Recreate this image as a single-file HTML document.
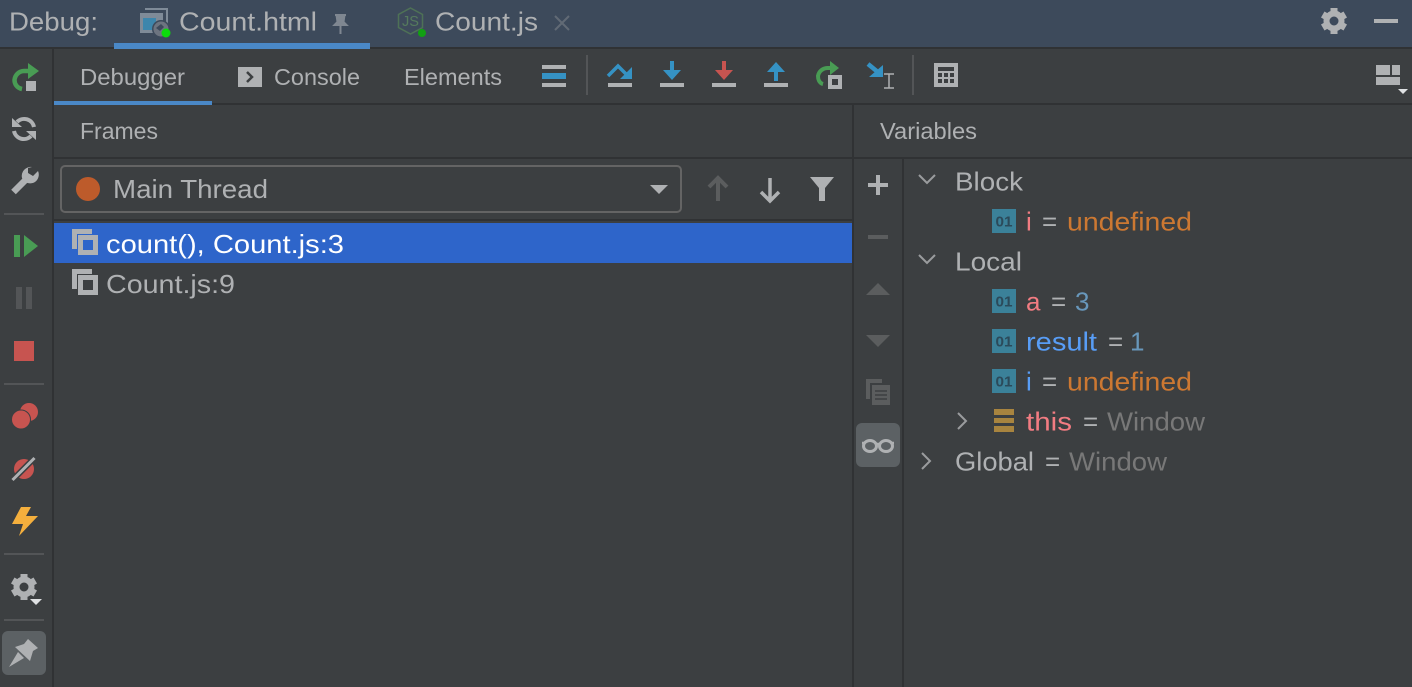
<!DOCTYPE html>
<html><head><meta charset="utf-8"><style>
html,body{margin:0;padding:0;background:#3c3f41;width:1412px;height:687px;overflow:hidden}
svg{display:block;position:absolute;left:0;top:0}
text{font-family:"Liberation Sans",sans-serif;font-size:26px;fill:#afb1b3}
.s{font-size:23.5px}
.p{fill:#f27c82}.b{fill:#589df6}.o{fill:#cc7832}.n{fill:#6897bb}.w{fill:#787878}
.ic{font-size:15px;font-weight:bold;fill:#2b4a5a}
</style></head><body>
<svg width="1412" height="687" viewBox="0 0 1412 687" xmlns="http://www.w3.org/2000/svg">
<defs>
<g id="gear"><circle r="7.500" fill="none" stroke="#afb1b3" stroke-width="6"/>
<path d="M-3.500-13h7v6h-7zM-3.500 7h7v6h-7z" fill="#afb1b3"/>
<path d="M-3.500-13h7v6h-7zM-3.500 7h7v6h-7z" fill="#afb1b3" transform="rotate(60)"/>
<path d="M-3.500-13h7v6h-7zM-3.500 7h7v6h-7z" fill="#afb1b3" transform="rotate(120)"/></g>
</defs>
<rect width="1412" height="687" fill="#3c3f41"/>
<!-- top bar -->
<rect width="1412" height="47" fill="#3d4a5b"/>
<rect y="47" width="1412" height="2" fill="#303234"/>
<rect x="114" y="43" width="256" height="6" fill="#4a88c7"/>
<text x="9" y="30.500" textLength="89" lengthAdjust="spacingAndGlyphs">Debug:</text>
<!-- html tab icon -->
<path d="M145 9h22v15" fill="none" stroke="#7f8b98" stroke-width="2"/>
<rect x="140" y="13" width="23" height="20" fill="#7f8b98"/>
<rect x="143" y="18" width="13" height="12" fill="#3d86ac"/>
<circle cx="161" cy="29" r="9" fill="#3d4a5b"/>
<circle cx="161" cy="29" r="7.500" fill="#6d7480"/>
<path d="M156 28l5-4 3 3-4 4z" fill="#3d4a5b"/>
<circle cx="166" cy="33" r="4.500" fill="#0cdc0c"/>
<text x="179" y="30.500" textLength="138" lengthAdjust="spacingAndGlyphs">Count.html</text>
<!-- pin -->
<path d="M335 15h11M336.500 15l1 7-3 3h12l-3-3 1-7zM340.500 25v9" fill="#7f8791" stroke="#7f8791" stroke-width="2"/>
<!-- js icon -->
<path d="M410.500 8l12 6.500v13l-12 6.500-12-6.500v-13z" fill="none" stroke="#4e7156" stroke-width="1.500"/>
<text x="402" y="26" textLength="17" lengthAdjust="spacingAndGlyphs" style="font-size:15px;fill:#557a5d">JS</text>
<circle cx="422" cy="33" r="4" fill="#12a012"/>
<text x="435" y="30.500" textLength="103" lengthAdjust="spacingAndGlyphs">Count.js</text>
<path d="M555 16l14 14M569 16l-14 14" stroke="#616a75" stroke-width="2"/>
<!-- settings -->
<use href="#gear" transform="translate(1334 21)"/>
<rect x="1374" y="19" width="24" height="4" fill="#afb1b3"/>

<!-- borders -->
<rect x="52" y="49" width="2" height="638" fill="#303234"/>
<rect x="54" y="103" width="1358" height="2" fill="#303234"/>
<rect x="54" y="157" width="1358" height="2" fill="#303234"/>
<rect x="852" y="105" width="2" height="582" fill="#303234"/>
<rect x="902" y="159" width="2" height="528" fill="#303234"/>
<rect x="54" y="219" width="798" height="2" fill="#303234"/>

<!-- tabs -->
<rect x="54" y="101" width="158" height="4" fill="#4a88c7"/>
<text class="s" x="80" y="85" textLength="105" lengthAdjust="spacingAndGlyphs">Debugger</text>
<rect x="238" y="67" width="24" height="20" fill="#afb1b3"/>
<path d="M247 72l5 5-5 5" fill="none" stroke="#3c3f41" stroke-width="2.500"/>
<text class="s" x="274" y="85" textLength="86" lengthAdjust="spacingAndGlyphs">Console</text>
<text class="s" x="404" y="85" textLength="98" lengthAdjust="spacingAndGlyphs">Elements</text>

<!-- toolbar -->
<rect x="542" y="65" width="24" height="4" fill="#afb1b3"/>
<rect x="542" y="73" width="24" height="6" fill="#3592c4"/>
<rect x="542" y="83" width="24" height="4" fill="#afb1b3"/>
<rect x="586" y="55" width="2" height="40" fill="#535557"/>
<!-- step over -->
<rect x="608" y="83" width="24" height="4" fill="#afb1b3"/>
<path d="M608 76l10-10 11 11" fill="none" stroke="#3592c4" stroke-width="3.500"/>
<path d="M632 67v12h-12z" fill="#3592c4"/>
<!-- step into -->
<rect x="660" y="83" width="24" height="4" fill="#afb1b3"/>
<path d="M670 61h4v9h7l-9 10-9-10h7z" fill="#3592c4"/>
<!-- force into -->
<rect x="712" y="83" width="24" height="4" fill="#afb1b3"/>
<path d="M722 61h4v9h7l-9 10-9-10h7z" fill="#c75450"/>
<!-- step out -->
<rect x="764" y="83" width="24" height="4" fill="#afb1b3"/>
<path d="M776 62l9 10h-7v9h-4v-9h-7z" fill="#3592c4"/>
<!-- run to cursor -->
<path d="M823 84C819 83 818 79 818 76 819 71 823 68 828 68h4" fill="none" stroke="#499c54" stroke-width="4"/>
<path d="M830 61l9 7-9 7z" fill="#499c54"/>
<rect x="828" y="75" width="14" height="14" fill="#afb1b3"/>
<rect x="832" y="79" width="6" height="6" fill="#3c3f41"/>
<!-- force to cursor -->
<path d="M868 64l11 9" stroke="#3592c4" stroke-width="4.500"/>
<path d="M883 65v12h-14z" fill="#3592c4"/>
<path d="M884 74h10M884 88h10M889 74v14" stroke="#afb1b3" stroke-width="1.500" fill="none"/>
<rect x="912" y="55" width="2" height="40" fill="#535557"/>
<!-- calc -->
<rect x="934" y="63" width="24" height="24" fill="#afb1b3"/>
<rect x="938" y="67" width="16" height="4" fill="#3c3f41"/>
<path d="M938 73h4v4h-4zM944 73h4v4h-4zM950 73h4v4h-4zM938 79h4v4h-4zM944 79h4v4h-4zM950 79h4v4h-4z" fill="#3c3f41"/>
<!-- layout -->
<rect x="1376" y="65" width="14" height="10" fill="#afb1b3"/>
<rect x="1392" y="65" width="8" height="10" fill="#afb1b3"/>
<rect x="1376" y="77" width="24" height="8" fill="#afb1b3"/>
<path d="M1398 89h10l-5 5z" fill="#dfe1e3"/>

<!-- left column -->
<path d="M22 89C17 88 14.500 84 14.500 80 15 75 19 71 24 71h6" fill="none" stroke="#499c54" stroke-width="4.500"/>
<path d="M28 63l11 8-11 8z" fill="#499c54"/>
<rect x="26" y="81" width="10" height="10" fill="#afb1b3"/>
<!-- sync -->
<path d="M17 122a10 10 0 0 1 17 5M31 136a10 10 0 0 1-17-5" fill="none" stroke="#afb1b3" stroke-width="4"/>
<path d="M12 118v9h10zM36 140v-9H26z" fill="#afb1b3"/>
<!-- wrench -->
<path d="M13.500 192l14-14" stroke="#afb1b3" stroke-width="6.500"/>
<path d="M32 167a9 9 0 0 0-10 11 9 9 0 0 0 13 4 9 9 0 0 0 3-11l-5 5-5-3v-5z" fill="#afb1b3"/>
<rect x="4" y="213" width="40" height="2" fill="#535557"/>
<!-- resume -->
<rect x="14" y="235" width="6" height="22" fill="#499c54"/>
<path d="M24 235l14 11-14 11z" fill="#499c54"/>
<!-- pause -->
<rect x="16" y="287" width="6" height="22" fill="#535557"/>
<rect x="26" y="287" width="6" height="22" fill="#535557"/>
<rect x="14" y="341" width="20" height="20" fill="#c75450"/>
<rect x="4" y="383" width="40" height="2" fill="#535557"/>
<!-- breakpoints -->
<circle cx="29" cy="412" r="9" fill="#c75450"/>
<circle cx="21" cy="419.500" r="9.500" fill="#c75450" stroke="#3c3f41" stroke-width="1"/>
<!-- mute -->
<circle cx="24" cy="469" r="10" fill="#c75450"/>
<path d="M12.500 480l22-22" stroke="#3c3f41" stroke-width="6"/>
<path d="M12.500 480l22-22" stroke="#afb1b3" stroke-width="3"/>
<!-- lightning -->
<path d="M21 507h10l-5 9h12l-19 20 4-12H12z" fill="#f4af3d"/>
<rect x="4" y="553" width="40" height="2" fill="#535557"/>
<!-- gear -->
<use href="#gear" transform="translate(24 587)"/>
<path d="M30 599h12l-6 6z" fill="#dfe1e3"/>
<rect x="4" y="619" width="40" height="2" fill="#535557"/>
<!-- pin btn -->
<rect x="2" y="631" width="44" height="44" rx="6" fill="#5c6164"/>
<path d="M28 639l10 9-5 3-3 10-15-14 9-3z" fill="#afb1b3"/>
<path d="M9 667l9-15 6 6z" fill="#afb1b3"/>

<!-- Frames -->
<text class="s" x="80" y="139" textLength="78" lengthAdjust="spacingAndGlyphs">Frames</text>
<text class="s" x="880" y="139" textLength="97" lengthAdjust="spacingAndGlyphs">Variables</text>
<rect x="61" y="166" width="620" height="46" rx="4" fill="#3c3f41" stroke="#646464" stroke-width="2"/>
<circle cx="88" cy="189" r="12" fill="#bd5b2b"/>
<text x="113" y="198" textLength="155" lengthAdjust="spacingAndGlyphs">Main Thread</text>
<path d="M650 185h18l-9 9z" fill="#afb1b3"/>
<path d="M718 178v23M709 187l9-9 9 9" fill="none" stroke="#5b5d5e" stroke-width="4"/>
<path d="M770 178v23M761 192l9 9 9-9" fill="none" stroke="#afb1b3" stroke-width="3.500"/>
<path d="M810 177h24l-9 11v13h-6v-13z" fill="#afb1b3"/>
<rect x="54" y="223" width="798" height="40" fill="#2e65ca"/>
<path d="M74.500 249v-17.500H92" fill="none" stroke="#afb1b3" stroke-width="5"/>
<rect x="80.500" y="237.500" width="15" height="15" fill="#2e65ca" stroke="#afb1b3" stroke-width="5"/>
<text x="106" y="253" textLength="238" lengthAdjust="spacingAndGlyphs" style="fill:#fff">count(), Count.js:3</text>
<path d="M74.500 289v-17.500H92" fill="none" stroke="#afb1b3" stroke-width="5"/>
<rect x="80.500" y="277.500" width="15" height="15" fill="#3c3f41" stroke="#afb1b3" stroke-width="5"/>
<text x="106" y="293" textLength="129" lengthAdjust="spacingAndGlyphs">Count.js:9</text>

<!-- side buttons -->
<path d="M878 175v20M868 185h20" stroke="#afb1b3" stroke-width="4"/>
<rect x="868" y="235" width="20" height="4" fill="#5b5d5e"/>
<path d="M866 295l12-12 12 12z" fill="#5b5d5e"/>
<path d="M866 335h24l-12 12z" fill="#5b5d5e"/>
<path d="M868 399v-18h14" fill="none" stroke="#5b5d5e" stroke-width="4"/>
<rect x="872" y="385" width="18" height="20" fill="#5b5d5e"/>
<path d="M875 391h12M875 395h12M875 399h12" stroke="#3c3f41" stroke-width="1.500"/>
<rect x="856" y="423" width="44" height="44" rx="6" fill="#5c6164"/>
<ellipse cx="870" cy="446" rx="6.500" ry="5.500" fill="none" stroke="#afb1b3" stroke-width="3"/>
<ellipse cx="886" cy="446" rx="6.500" ry="5.500" fill="none" stroke="#afb1b3" stroke-width="3"/>
<path d="M862 443h2M876 444h4M892 443h2" stroke="#afb1b3" stroke-width="2.500"/>

<!-- variables -->
<path d="M919 175l8 8 8-8" fill="none" stroke="#9a9c9e" stroke-width="2"/>
<text x="955" y="190.500" textLength="68" lengthAdjust="spacingAndGlyphs">Block</text>
<rect x="992" y="209" width="24" height="24" fill="#3b8199"/>
<text class="ic" x="995.500" y="226.500" textLength="17" lengthAdjust="spacingAndGlyphs">01</text>
<text class="p" x="1026" y="230.500">i</text>
<text x="1042" y="230.500">=</text>
<text class="o" x="1067" y="230.500" textLength="125" lengthAdjust="spacingAndGlyphs">undefined</text>

<path d="M919 255l8 8 8-8" fill="none" stroke="#9a9c9e" stroke-width="2"/>
<text x="955" y="270.500" textLength="67" lengthAdjust="spacingAndGlyphs">Local</text>

<rect x="992" y="289" width="24" height="24" fill="#3b8199"/>
<text class="ic" x="995.500" y="306.500" textLength="17" lengthAdjust="spacingAndGlyphs">01</text>
<text class="p" x="1026" y="310.500">a</text>
<text x="1051" y="310.500">=</text>
<text class="n" x="1075" y="310.500">3</text>

<rect x="992" y="329" width="24" height="24" fill="#3b8199"/>
<text class="ic" x="995.500" y="346.500" textLength="17" lengthAdjust="spacingAndGlyphs">01</text>
<text class="b" x="1026" y="350.500" textLength="71" lengthAdjust="spacingAndGlyphs">result</text>
<text x="1108" y="350.500">=</text>
<text class="n" x="1130" y="350.500">1</text>

<rect x="992" y="369" width="24" height="24" fill="#3b8199"/>
<text class="ic" x="995.500" y="386.500" textLength="17" lengthAdjust="spacingAndGlyphs">01</text>
<text class="b" x="1026" y="390.500">i</text>
<text x="1042" y="390.500">=</text>
<text class="o" x="1067" y="390.500" textLength="125" lengthAdjust="spacingAndGlyphs">undefined</text>

<path d="M958 413l8 8-8 8" fill="none" stroke="#9a9c9e" stroke-width="2"/>
<rect x="994" y="409" width="20" height="6" fill="#a8843f"/>
<rect x="994" y="418" width="20" height="5" fill="#a8843f"/>
<rect x="994" y="426" width="20" height="6" fill="#a8843f"/>
<text class="p" x="1026" y="430.500" textLength="46" lengthAdjust="spacingAndGlyphs">this</text>
<text x="1083" y="430.500">=</text>
<text class="w" x="1107" y="430.500" textLength="98" lengthAdjust="spacingAndGlyphs">Window</text>

<path d="M922 453l8 8-8 8" fill="none" stroke="#9a9c9e" stroke-width="2"/>
<text x="955" y="470.500" textLength="79" lengthAdjust="spacingAndGlyphs">Global</text>
<text x="1045" y="470.500">=</text>
<text class="w" x="1069" y="470.500" textLength="98" lengthAdjust="spacingAndGlyphs">Window</text>
</svg>
</body></html>
